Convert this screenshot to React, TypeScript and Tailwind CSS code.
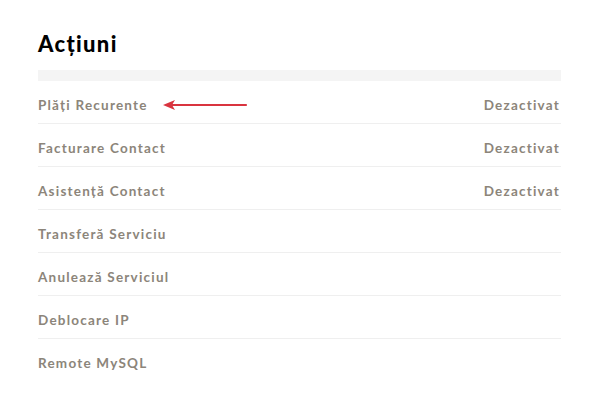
const rows = [
  { label: "Plăți Recurente", status: "Dezactivat", arrow: true },
  { label: "Facturare Contact", status: "Dezactivat" },
  { label: "Asistență Contact", status: "Dezactivat" },
  { label: "Transferă Serviciu" },
  { label: "Anulează Serviciul" },
  { label: "Deblocare IP" },
  { label: "Remote MySQL" },
];

function Arrow() {
  return (
    <svg width="86" height="12" viewBox="0 0 86 12" className="ml-[14px]">
      <line x1="8" y1="6" x2="84" y2="6" stroke="#d9343f" strokeWidth="2.2" strokeLinecap="round" />
      <path d="M1 6 L13 1 L10 6 L13 11 Z" fill="#d9343f" />
    </svg>
  );
}

export default function App() {
  return (
    <div className="w-[597px] h-[404px] bg-white font-['Lato',sans-serif]">
      <div className="pl-[38px] pr-[36px] pt-[30px]">
        <h2 className="text-[22px] leading-[28px] font-black text-black tracking-[0.06em]">Acțiuni</h2>
        <div className="mt-[12px] h-[11px] bg-[#f4f4f4]" />
        <ul>
          {rows.map((r, i) => (
            <li
              key={r.label}
              className={`h-[43px] flex items-center justify-between pt-[6px] text-[13.5px] font-bold tracking-[0.09em] text-[#8c857a] ${
                i < rows.length - 1 ? "border-b border-[#efefef]" : ""
              }`}
            >
              <div className="flex items-center">
                <span>{r.label}</span>
                {r.arrow && <Arrow />}
              </div>
              {r.status && <span className="mr-[1px]">{r.status}</span>}
            </li>
          ))}
        </ul>
      </div>
    </div>
  );
}
